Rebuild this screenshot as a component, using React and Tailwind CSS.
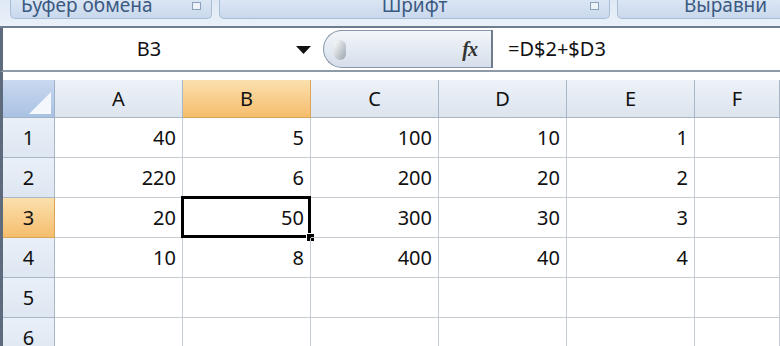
import React from 'react';

const cols = ['A', 'B', 'C', 'D', 'E', 'F'];
const rows = [
  ['40', '5', '100', '10', '1', ''],
  ['220', '6', '200', '20', '2', ''],
  ['20', '50', '300', '30', '3', ''],
  ['10', '8', '400', '40', '4', ''],
  ['', '', '', '', '', ''],
  ['', '', '', '', '', ''],
];

const font = { fontFamily: '"Noto Sans", "Liberation Sans", sans-serif' };

const RibbonGroup = ({ label, className, launcher = true }) => (
  <div className={`relative h-[19px] overflow-hidden rounded-b-[5px] border border-t-0 border-[#a9bdd6] bg-gradient-to-b from-[#dbe6f4] to-[#c9d8ec] flex items-start text-[19px] leading-[20px] text-[#3b5a82] ${className}`}>
    <span className="-mt-[5px] whitespace-nowrap">{label}</span>
    {launcher && (
      <span className="absolute right-[10px] top-[2px] w-[9px] h-[8px] border border-[#8aa0bb] bg-[#eef3f9]" />
    )}
  </div>
);

export default function App() {
  return (
    <div className="w-[780px] h-[346px] overflow-hidden bg-white" style={font}>
      {/* ribbon group labels */}
      <div className="h-[28px] bg-gradient-to-b from-[#dfe9f5] to-[#e9f0f8] border-b-2 border-[#6d7c8e] flex gap-[7px] pl-[10px] overflow-hidden">
        <RibbonGroup label="Буфер обмена" className="w-[202px] shrink-0 pl-[10px]" />
        <RibbonGroup label="Шрифт" className="w-[391px] shrink-0 justify-center" />
        <RibbonGroup label="Выравни" className="w-[170px] shrink-0 pl-[66px]" launcher={false} />
      </div>

      {/* formula bar */}
      <div className="h-[44px] flex border-l-[3px] border-[#5d6b7c] border-b-2 border-b-[#8e9aa8] bg-white">
        <div className="w-[320px] shrink-0 relative flex items-center justify-center text-[20px] text-[#111]">
          <span className="-ml-[28px]">B3</span>
          <svg className="absolute left-[293px] top-[18px]" width="15" height="9" viewBox="0 0 15 9">
            <path d="M0 0 L15 0 L7.5 8 Z" fill="#111" />
          </svg>
        </div>
        <div className="w-[168px] shrink-0 my-[2px] rounded-l-full border border-r-0 border-[#8796a8] bg-gradient-to-b from-[#f3f6fa] to-[#d5deea] relative flex items-center justify-end pr-[14px]">
          <span className="absolute left-[10px] top-[9px] w-[12px] h-[20px] rounded-full bg-gradient-to-br from-[#ffffff] to-[#9aa4ae]" />
          <span className="italic font-bold text-[20px] text-[#333] tracking-[-1px]" style={{ fontFamily: '"Liberation Serif", serif' }}>fx</span>
        </div>
        <div className="w-[2px] bg-[#6f7c8b] my-[2px]" />
        <div className="flex-1 flex items-center pl-[15px] text-[20px] text-[#111]">=D$2+$D3</div>
      </div>

      <div className="h-[8px] bg-white border-l-[3px] border-[#5d6b7c]" />

      {/* sheet */}
      <div className="border-l-[3px] border-[#5d6b7c] grid grid-cols-[52px_128px_128px_128px_128px_128px_1fr] text-[20px] text-[#111]">
        <div className="h-[38px] relative bg-gradient-to-b from-[#c9d9ef] to-[#a9c2e3] border-r border-b border-[#9fb2c9] overflow-hidden">
          <svg className="absolute right-[3px] bottom-[3px]" width="22" height="22" viewBox="0 0 22 22">
            <path d="M22 0 L22 22 L0 22 Z" fill="#f4f7fb" />
          </svg>
        </div>
        {cols.map((c) => (
          <div
            key={c}
            className={`h-[38px] flex items-center justify-center border-r border-b ${
              c === 'B'
                ? 'bg-gradient-to-b from-[#fbe0ad] to-[#f5bd6c] border-[#d9a45a]'
                : 'bg-gradient-to-b from-[#eef2f8] to-[#dce4ee] border-[#a8b6c6]'
            }`}
          >
            {c}
          </div>
        ))}
        {rows.map((r, i) => (
          <React.Fragment key={i}>
            <div
              className={`h-[40px] flex items-center justify-center border-r border-b ${
                i === 2
                  ? 'bg-gradient-to-b from-[#fbe0ad] to-[#f5bd6c] border-[#d9a45a]'
                  : 'bg-gradient-to-b from-[#eaf0f8] to-[#dde6f1] border-[#a8b6c6]'
              }`}
            >
              {i + 1}
            </div>
            {r.map((v, j) => (
              <div key={j} className="relative h-[40px] flex items-center justify-end pr-[6px] border-r border-b border-[#c6ccd4]">
                {v}
                {i === 2 && j === 1 && (
                  <>
                    <span className="absolute -left-[2px] -top-[2px] -right-[1px] -bottom-[1px] border-[3px] border-black" />
                    <span className="absolute -right-[5px] -bottom-[5px] w-[9px] h-[9px] bg-black border border-white" />
                  </>
                )}
              </div>
            ))}
          </React.Fragment>
        ))}
      </div>
    </div>
  );
}
